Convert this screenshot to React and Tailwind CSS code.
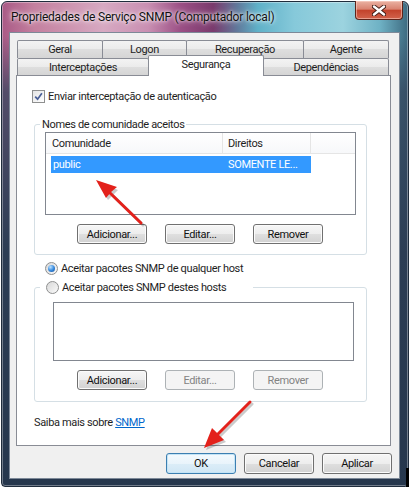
import clsx from 'clsx';

function Button({ children, disabled, primary, className }) {
  return (
    <button
      type="button"
      className={clsx(
        'flex w-[70px] items-center justify-center rounded-[3px] border text-[11px] leading-none',
        disabled
          ? 'border-[#adb2b5] bg-[#f4f4f4] text-[#838383]'
          : primary
            ? 'border-[#3c7fb1] bg-[linear-gradient(to_bottom,#f4fafe_0%,#e9f4fb_50%,#dcedf8_50%,#d0e7f5_100%)] text-[#111] shadow-[inset_0_0_0_1px_#c4e4f6]'
            : 'border-[#707070] bg-[linear-gradient(to_bottom,#f6f6f6_0%,#ededed_50%,#dfdfdf_50%,#d2d2d2_100%)] text-[#111] shadow-[inset_0_0_0_1px_#fbfbfb]',
        className
      )}
    >
      {children}
    </button>
  );
}

function Tab({ label, className, selected }) {
  return (
    <div
      className={clsx(
        'flex items-center justify-center rounded-t-[2px] border border-b-0 border-[#898c95] text-[11px] leading-none text-[#1e1e1e]',
        selected
          ? 'relative z-10 -mt-[3px] -mb-px bg-white pb-[3px]'
          : 'bg-[linear-gradient(to_bottom,#f3f3f3_0%,#ebebeb_50%,#dedede_50%,#d5d5d5_100%)]',
        className
      )}
    >
      {label}
    </div>
  );
}

function Checkbox() {
  return (
    <span className="flex h-[13px] w-[13px] items-center justify-center border border-[#8e8f8f] bg-[linear-gradient(135deg,#e4e4e4,#ffffff)]">
      <svg width="9" height="9" viewBox="0 0 9 9">
        <path d="M1.2 4.6 L3.6 7.2 L7.9 1.2" fill="none" stroke="#4a5f97" strokeWidth="1.7" />
      </svg>
    </span>
  );
}

function Radio({ checked }) {
  return (
    <span className="flex h-[13px] w-[13px] items-center justify-center rounded-full border border-[#8e8f8f] bg-[linear-gradient(135deg,#d8d8d8,#fafafa)]">
      {checked && (
        <span className="h-[7px] w-[7px] rounded-full bg-[radial-gradient(circle_at_35%_30%,#bfe3ff_0%,#3a8de0_50%,#0f4b98_100%)]" />
      )}
    </span>
  );
}

export default function App() {
  return (
    <div className="relative h-[491px] w-[412px] overflow-hidden bg-white font-[Roboto,sans-serif] tracking-[-0.35px]">
      {/* janela */}
      <div className="relative ml-px mt-px flex h-[486px] w-[408px] flex-col rounded-t-[6px] rounded-b-[4px] border border-[#1f2c3c] bg-[linear-gradient(to_bottom,transparent_0px,transparent_34px,rgba(52,70,94,0.75)_90px,#2c3d54_250px,#26374d_100%),linear-gradient(to_right,#a95a86_0%,#c4809f_8%,#d7a9c2_25%,#c98fb2_36%,#9b4f85_44%,#7a3a6d_52%,#617a9c_58%,#5fb1c8_63%,#86c9da_72%,#9cd3df_84%,#6fb2c5_93%,#3d6a80_100%)] shadow-[inset_0_0_0_1px_rgba(255,255,255,0.35)]">
        {/* titulo */}
        <div className="flex h-[29px] items-center pl-[9px] text-[12px] tracking-[-0.2px] text-[#111] [text-shadow:0_0_6px_#fff,0_0_3px_#fff]">
          Propriedades de Serviço SNMP (Computador local)
        </div>
        <div className="absolute -top-px right-[5px] flex h-[19px] w-[48px] items-center justify-center rounded-b-[4px] border border-t-0 border-[#5e241a] bg-[linear-gradient(to_bottom,#eab2a3_0%,#d98371_45%,#c3432c_52%,#d2634c_100%)] shadow-[inset_0_0_0_1px_rgba(255,220,210,0.5)]">
          <svg width="14" height="11" viewBox="0 0 14 11">
            <path d="M2 1.5 L12 9.5 M12 1.5 L2 9.5" stroke="#3d1a14" strokeWidth="4.2" strokeLinecap="round" />
            <path d="M2 1.5 L12 9.5 M12 1.5 L2 9.5" stroke="#ffffff" strokeWidth="2.4" strokeLinecap="round" />
          </svg>
        </div>

        {/* area cliente */}
        <div className="mb-[7px] ml-[7px] mr-[8px] mt-px flex flex-1 flex-col border border-[#7d8998] bg-[#f0f0f0] pt-[7px]">
          {/* abas */}
          <div className="ml-[7px] flex flex-col">
            <div className="flex h-[18px]">
              <Tab label="Geral" className="w-[86px]" />
              <Tab label="Logon" className="-ml-px w-[85px]" />
              <Tab label="Recuperação" className="-ml-px w-[118px]" />
              <Tab label="Agente" className="-ml-px w-[86px]" />
            </div>
            <div className="flex h-[17px] items-start">
              <Tab label="Interceptações" className="h-[17px] w-[132px]" />
              <Tab label="Segurança" selected className="-ml-px h-[21px] w-[116px]" />
              <Tab label="Dependências" className="-ml-px h-[17px] w-[126px]" />
            </div>
          </div>

          {/* painel */}
          <div className="ml-[6px] flex h-[371px] w-[375px] flex-col border border-[#898c95] bg-white pl-[15px] pt-[14px] text-[11px] leading-[13px] text-[#1e1e1e]">
            <div className="flex h-[13px] items-center gap-[3px]">
              <Checkbox />
              <span>Enviar interceptação de autenticação</span>
            </div>

            <fieldset className="ml-[2px] mt-[15px] w-[333px] rounded-[3px] border border-[#d5dfe5] pb-[10px]">
              <legend className="ml-[5px] px-[2px]">Nomes de comunidade aceitos</legend>
              <div className="ml-[10px] mt-px flex h-[83px] w-[311px] flex-col border border-[#828790]">
                <div className="flex h-[21px] border-b border-[#e5e5e5] bg-[linear-gradient(to_bottom,#ffffff,#f7f8fa)]">
                  <div className="flex w-[177px] items-center border-r border-[#e5e5e5] pl-[6px]">Comunidade</div>
                  <div className="flex w-[88px] items-center border-r border-[#e5e5e5] pl-[5px]">Direitos</div>
                </div>
                <div className="ml-[5px] mt-[2px] flex h-[17px] w-[260px] items-center bg-[#3399ff] text-white">
                  <span className="w-[172px] pl-[2px]">public</span>
                  <span className="pl-[5px]">SOMENTE LE...</span>
                </div>
              </div>
              <div className="ml-[42px] mt-[9px] flex h-[20px] gap-[18px]">
                <Button>Adicionar...</Button>
                <Button>Editar...</Button>
                <Button>Remover</Button>
              </div>
            </fieldset>

            <div className="ml-[13px] mt-[7px] flex h-[13px] items-center gap-[3px]">
              <Radio checked />
              <span>Aceitar pacotes SNMP de qualquer host</span>
            </div>

            <fieldset className="ml-[2px] mt-[6px] w-[333px] rounded-[3px] border border-[#d5dfe5] pb-[11px]">
              <legend className="ml-[5px] flex items-center gap-[3px] pl-[6px] pr-[27px]">
                <Radio />
                <span>Aceitar pacotes SNMP destes hosts</span>
              </legend>
              <div className="ml-[18px] mt-[8px] h-[59px] w-[301px] border border-[#828790] bg-white" />
              <div className="ml-[42px] mt-[9px] flex h-[20px] gap-[18px]">
                <Button>Adicionar...</Button>
                <Button disabled>Editar...</Button>
                <Button disabled>Remover</Button>
              </div>
            </fieldset>

            <div className="ml-[2px] mt-[14px]">
              Saiba mais sobre <span className="text-[#0066cc] underline">SNMP</span>
            </div>
          </div>

          {/* botoes */}
          <div className="mr-[7px] mt-[7px] flex h-[21px] justify-end gap-[8px]">
            <Button primary>OK</Button>
            <Button>Cancelar</Button>
            <Button>Aplicar</Button>
          </div>
        </div>
      </div>

      <div className="absolute left-[406px] top-[468px] h-[19px] w-[3px] bg-black" />

      {/* setas vermelhas */}
      <svg className="pointer-events-none absolute left-0 top-0" width="412" height="491" viewBox="0 0 412 491">
        <g opacity="0.25" transform="translate(2 2)">
          <path d="M141 223 L108 191" stroke="#333" strokeWidth="3" strokeLinecap="round" />
          <path d="M96 180 L116 188 L106 198 Z" fill="#333" />
          <path d="M250 402 L216 436" stroke="#333" strokeWidth="3" strokeLinecap="round" />
          <path d="M204 448 L212 428 L224 440 Z" fill="#333" />
        </g>
        <path d="M141 223 L108 191" stroke="#e3211b" strokeWidth="3" strokeLinecap="round" />
        <path d="M96 180 L117 187 L111 192 L106 198 Z" fill="#e3211b" />
        <path d="M250 402 L216 436" stroke="#e3211b" strokeWidth="3" strokeLinecap="round" />
        <path d="M204 448 L212 428 L218 434 L224 440 Z" fill="#e3211b" />
      </svg>
    </div>
  );
}
